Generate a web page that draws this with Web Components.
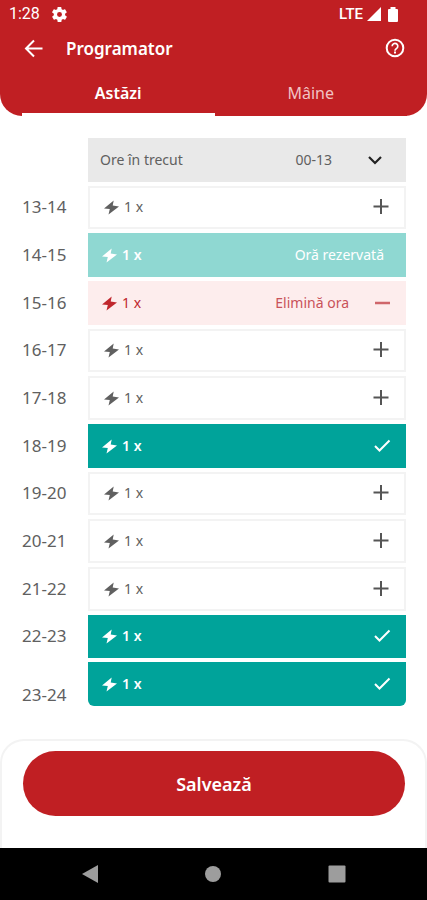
<!DOCTYPE html>
<html lang="ro">
<head>
<meta charset="utf-8">
<meta name="viewport" content="width=device-width, initial-scale=1">
<title>Programator</title>
<style>
  html, body { margin: 0; background: #fff; }
  body { font-family: "Noto Sans", "Open Sans", sans-serif; }
</style>
</head>
<body>
<planner-app>
  <planner-header slot="header" heading="Programator">
    <status-bar slot="status" time="1:28" network="LTE"></status-bar>
    <planner-tab slot="tabs" active>Astăzi</planner-tab>
    <planner-tab slot="tabs">Mâine</planner-tab>
  </planner-header>
  <past-hours range="00-13">Ore în trecut</past-hours>
  <hour-slot hours="13-14" state="free"></hour-slot>
  <hour-slot hours="14-15" state="reserved">Oră rezervată</hour-slot>
  <hour-slot hours="15-16" state="remove">Elimină ora</hour-slot>
  <hour-slot hours="16-17" state="free"></hour-slot>
  <hour-slot hours="17-18" state="free"></hour-slot>
  <hour-slot hours="18-19" state="chosen"></hour-slot>
  <hour-slot hours="19-20" state="free"></hour-slot>
  <hour-slot hours="20-21" state="free"></hour-slot>
  <hour-slot hours="21-22" state="free"></hour-slot>
  <hour-slot hours="22-23" state="chosen"></hour-slot>
  <hour-slot hours="23-24" state="chosen" last></hour-slot>
  <save-panel slot="footer">Salvează</save-panel>
  <system-nav slot="footer"></system-nav>
</planner-app>

<script>
const define = (name, render) => customElements.define(name, class extends HTMLElement {
  connectedCallback() {
    if (this.shadowRoot) return;
    const template = document.createElement('template');
    template.innerHTML = render(this);
    this.attachShadow({ mode: 'open' }).append(template.content.cloneNode(true));
  }
});

const reset = `
  *, *::before { box-sizing: border-box; }
  button { font: inherit; color: inherit; background: none; border: 0; margin: 0; padding: 0; cursor: pointer; }
  svg { display: block; flex: none; }
`;

define('planner-app', () => `
  <style>${reset}
    :host { display: flex; flex-direction: column; min-height: 100vh; }
    main { flex: 1; display: grid; grid-auto-rows: 1fr; gap: 4px; padding: 22px 21px 33px 22px; }
  </style>
  <slot name="header"></slot>
  <main><slot></slot></main>
  <slot name="footer"></slot>`);

define('status-bar', el => `
  <style>${reset}
    :host { display: flex; align-items: center; height: 28px; padding: 0 26px 0 9px; gap: 4px;
      font: 500 15px/20px Roboto, sans-serif; color: #fff; }
    .time { font-size: 16px; font-weight: 400; }
    .gear { margin: 0 auto 0 8px; }
  </style>
  <span class="time">${el.getAttribute('time')}</span>
  <svg class="gear" width="15" height="15" viewBox="2 2 20 20" fill="#fff"><path d="M19.4 13a7.600 7.600 0 0 0 0-2l2.100-1.600c.2-.2.2-.4.1-.6l-2-3.500c-.1-.2-.4-.3-.6-.2l-2.500 1a7 7 0 0 0-1.700-1L14.400 2.500c0-.3-.2-.5-.5-.5h-4c-.3 0-.5.2-.5.500L9 5.100a7 7 0 0 0-1.700 1l-2.500-1c-.2-.1-.5 0-.6.2l-2 3.500c-.1.2-.1.4.1.6L4.500 11a7.600 7.600 0 0 0 0 2l-2.100 1.600c-.2.2-.2.4-.1.6l2 3.500c.1.2.4.3.6.2l2.500-1c.5.4 1.100.7 1.700 1l.4 2.600c0 .3.2.5.500.5h4c.3 0 .5-.2.500-.5l.4-2.600a7 7 0 0 0 1.700-1l2.500 1c.2.1.5 0 .6-.2l2-3.500c.1-.2.1-.4-.1-.6zM12 15.300a3.300 3.300 0 1 1 0-6.600 3.300 3.300 0 0 1 0 6.600z"/></svg>
  <span>${el.getAttribute('network')}</span>
  <svg width="14" height="14" viewBox="0 0 14 14" fill="#fff"><path d="M14 0v14H0z"/></svg>
  <svg width="16" height="15" viewBox="0 0 16 15" fill="#fff"><path d="M5.500 0h5v2H12q1 0 1 1v11q0 1-1 1H4q-1 0-1-1V3q0-1 1-1h1.500z"/></svg>`);

define('planner-header', el => `
  <style>${reset}
    :host { display: block; background: #c01f23; color: #fff; border-radius: 0 0 22px 22px; }
    .bar { display: flex; align-items: center; height: 42px; padding: 0 20px 0 22px; }
    h1 { margin: 0 auto 0 21px; font-size: 17px; line-height: 24px; font-weight: 600; }
    .tabs { display: grid; grid-template-columns: 1fr 1fr; padding: 0 20px 0 22px; height: 46px; }
  </style>
  <slot name="status"></slot>
  <div class="bar">
    <button aria-label="Înapoi"><svg width="23" height="24" viewBox="0 0 23 24" fill="none" stroke="#fff" stroke-width="2"><path d="M20.500 11.500H4M12 3.500l-8 8 8 8"/></svg></button>
    <h1>${el.getAttribute('heading')}</h1>
    <button aria-label="Ajutor"><svg width="24" height="24" viewBox="0 0 24 24" fill="none" stroke="#fff" stroke-width="2"><circle cx="12" cy="11" r="8.300"/><path d="M9.200 9.300a2.800 2.800 0 1 1 4.500 2.100c-1 .8-1.700 1.200-1.700 2.300" stroke-width="1.700"/><path d="M12 14.600v1.800"/></svg></button>
  </div>
  <div class="tabs" role="tablist"><slot name="tabs"></slot></div>`);

define('planner-tab', el => `
  <style>${reset}
    :host { display: grid; font-size: 16px; line-height: 20px; font-weight: 400; color: #f1c3c4; }
    :host([active]) { font-weight: 600; color: #fff; }
    button { padding-top: 2px; border-bottom: 3px solid #c01f23; }
    :host([active]) button { border-color: #fff; }
  </style>
  <button role="tab" aria-selected="${el.hasAttribute('active')}"><slot></slot></button>`);

define('past-hours', el => `
  <style>${reset}
    :host { display: grid; padding-left: 66px; }
    button { display: flex; align-items: center; padding: 0 21px 0 12px; background: #e9e9e9; color: #606060;
      font-size: 14px; line-height: 20px; }
    .range { margin: 0 33px 0 auto; }
  </style>
  <button aria-expanded="false"><span><slot></slot></span><span class="range">${el.getAttribute('range')}</span>
    <svg width="20" height="20" viewBox="0 0 20 20" fill="none" stroke="#222" stroke-width="2.200"><path d="M4 7l6 6 6-6"/></svg></button>`);

const marks = {
  free: '<svg width="24" height="24" viewBox="0 0 24 24" fill="none" stroke="#555" stroke-width="2"><path d="M12 4v15M4.500 11.500h15"/></svg>',
  chosen: '<svg width="24" height="24" viewBox="0 0 24 24" fill="none" stroke="#fff" stroke-width="2"><path d="M4 12l4.500 4.500L18.500 6.500"/></svg>',
  remove: '<svg width="24" height="24" viewBox="0 0 24 24" fill="none" stroke="#cf666b" stroke-width="2.500"><path d="M4 12h15"/></svg>',
  reserved: ''
};

define('hour-slot', el => {
  const hours = el.getAttribute('hours');
  return `
  <style>${reset}
    :host { display: grid; grid-template-columns: 66px 1fr; }
    label { align-self: center; font-size: 17px; line-height: 22px; font-weight: 400; color: #606060; }
    :host([last]) label { align-self: end; }
    button { display: flex; align-items: center; padding: 0 11px 0 14px; font-size: 14px; line-height: 20px; color: #606060; background: #fff; }
    .bolt { margin-right: 4px; }
    .note { margin: 0 22px 0 auto; }
    :host([state="free"]) button { border: 2px solid #f3f3f3; color: #606060; }
    :host([state="free"]) .note { margin-right: 0; }
    :host([state="reserved"]) button { background: #8fd8d2; color: #fff; padding-right: 0; }
    :host([state="reserved"]) .count, :host([state="chosen"]) .count { font-weight: 600; }
    :host([state="remove"]) button { background: #fdeded; color: #c0272d; }
    :host([state="remove"]) .note { color: #c9525a; }
    :host([state="chosen"]) button { background: #00a39a; color: #fff; }
    :host([last]) button { border-radius: 0 0 6px 6px; }
  </style>
  <label for="slot">${hours}</label>
  <button id="slot">
    <svg class="bolt" width="16" height="16" viewBox="0 0 16 16" fill="currentColor"><path d="M9.700 1.500L0 9.500l5.800.5-1.300 5.500L15 7.500 8.700 6.600z"/></svg>
    <span class="count">1 x</span>
    <span class="note"><slot></slot></span>
    ${marks[el.getAttribute('state')]}
  </button>`;
});

define('save-panel', () => `
  <style>${reset}
    :host { display: grid; box-sizing: border-box; padding: 10px 20px 32px 21px; border: 2px solid #f3f3f3; border-bottom: 0;
      border-radius: 24px 24px 0 0; background: #fff; }
    button { height: 65px; border-radius: 33px; background: #c01f23; color: #fff; font-size: 18px; line-height: 24px; font-weight: 600; }
  </style>
  <button><slot></slot></button>`);

define('system-nav', () => `
  <style>${reset}
    :host { display: grid; grid-template-columns: repeat(3, 1fr); height: 52px; padding: 0 28px; box-sizing: border-box; background: #000; }
    button { display: grid; place-items: center; }
  </style>
  <button aria-label="Înapoi"><svg width="18" height="20" viewBox="0 0 18 20" fill="#9d9d9d"><path d="M17 1v18L1 10z"/></svg></button>
  <button aria-label="Acasă"><svg width="18" height="18" viewBox="0 0 18 18" fill="#9d9d9d"><circle cx="9" cy="9" r="8"/></svg></button>
  <button aria-label="Recente"><svg width="18" height="18" viewBox="0 0 18 18" fill="#9d9d9d"><rect x="0.500" y="0.500" width="17" height="17" rx="1"/></svg></button>`);
</script>
</body>
</html>
